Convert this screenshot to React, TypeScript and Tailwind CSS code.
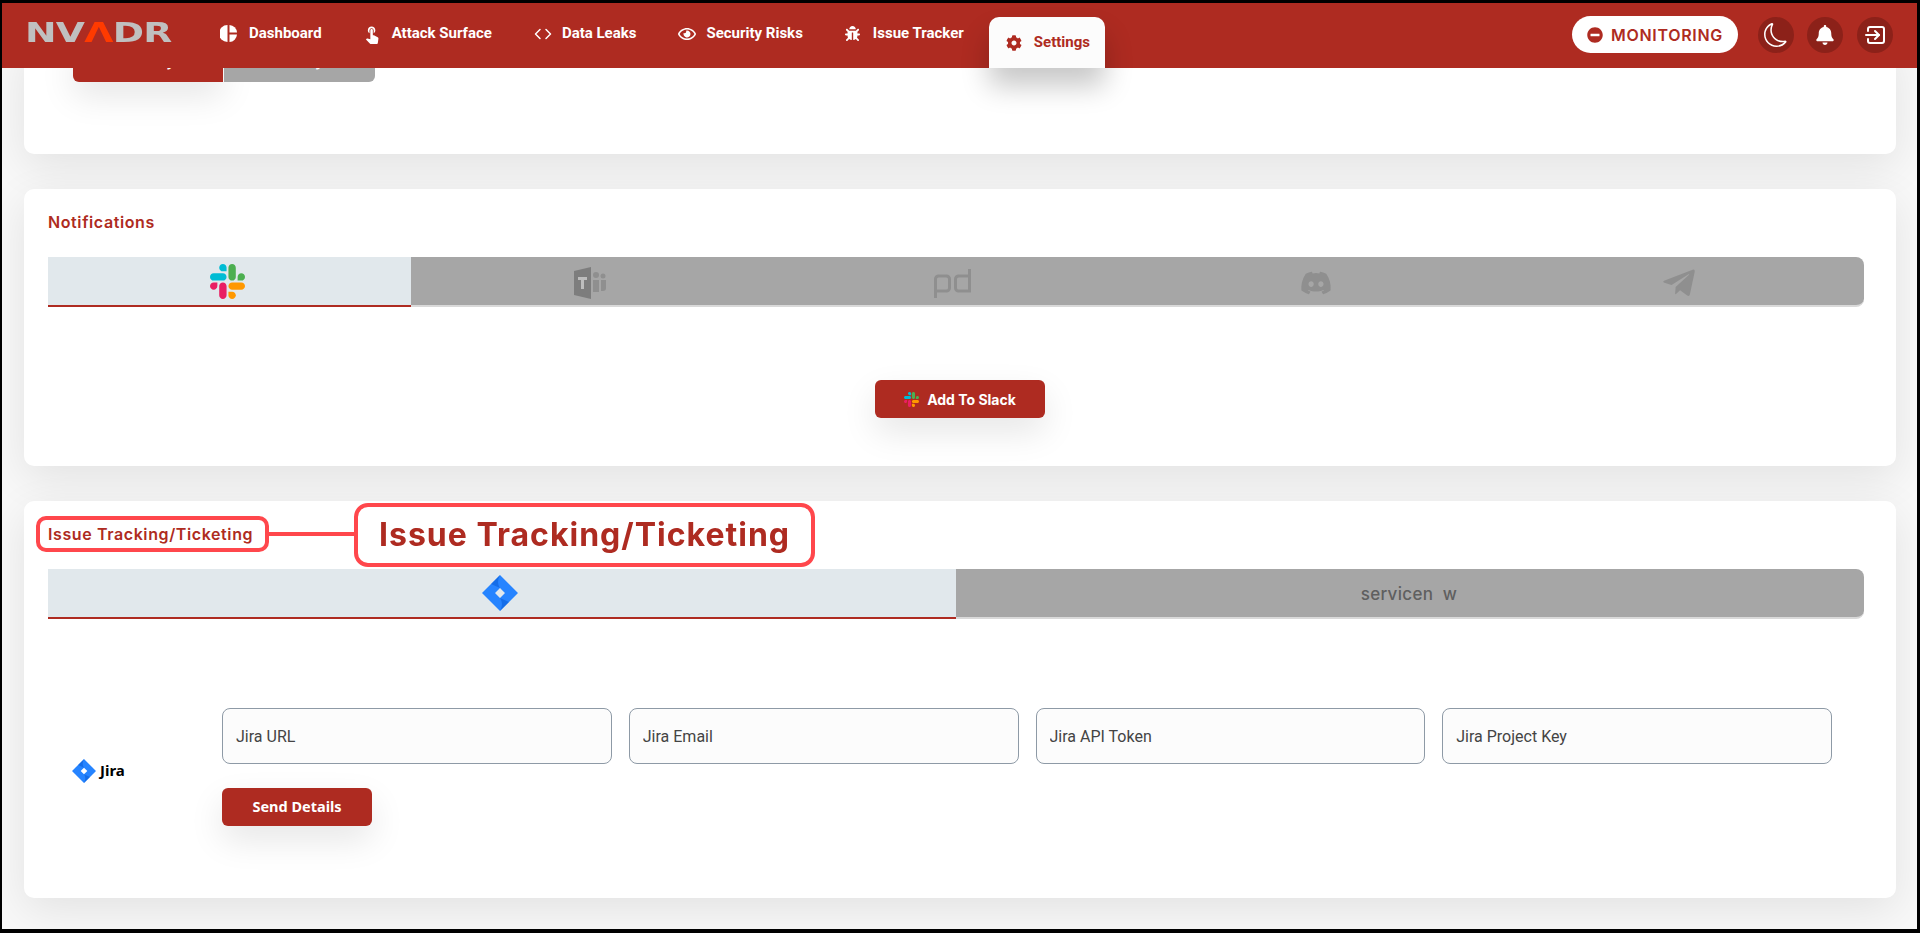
import React from 'react'
import { Code } from 'lucide-react'
import { BsMoon } from 'react-icons/bs'
import { FaBell, FaBug, FaCog, FaDiscord, FaMinusCircle, FaRegEye, FaTelegramPlane } from 'react-icons/fa'
import { MdTouchApp } from 'react-icons/md'

const SlackIcon = ({ size }: { size: number }) => (
  <svg width={size} height={size} viewBox="0 0 122.8 122.8">
    <path fill="#e91e63" d="M25.8 77.6c0 7.1-5.8 12.9-12.9 12.9S0 84.7 0 77.6s5.8-12.9 12.9-12.9h12.9v12.9z" />
    <path fill="#e91e63" d="M32.3 77.6c0-7.1 5.8-12.9 12.9-12.9s12.9 5.8 12.9 12.9v32.3c0 7.1-5.8 12.9-12.9 12.9s-12.9-5.8-12.9-12.9V77.6z" />
    <path fill="#00bcd4" d="M45.2 25.8c-7.1 0-12.9-5.8-12.9-12.9S38.1 0 45.2 0s12.9 5.8 12.9 12.9v12.9H45.2z" />
    <path fill="#00bcd4" d="M45.2 32.3c7.1 0 12.9 5.8 12.9 12.9s-5.8 12.9-12.9 12.9H12.9C5.8 58.1 0 52.3 0 45.2s5.8-12.9 12.9-12.9h32.3z" />
    <path fill="#4caf50" d="M97 45.2c0-7.1 5.8-12.9 12.9-12.9s12.9 5.8 12.9 12.9-5.8 12.9-12.9 12.9H97V45.2z" />
    <path fill="#4caf50" d="M90.5 45.2c0 7.1-5.8 12.9-12.9 12.9s-12.9-5.8-12.9-12.9V12.9C64.7 5.8 70.5 0 77.6 0s12.9 5.8 12.9 12.9v32.3z" />
    <path fill="#ff9800" d="M77.6 97c7.1 0 12.9 5.8 12.9 12.9s-5.8 12.9-12.9 12.9-12.9-5.8-12.9-12.9V97h12.9z" />
    <path fill="#ff9800" d="M77.6 90.5c-7.1 0-12.9-5.8-12.9-12.9s5.8-12.9 12.9-12.9h32.3c7.1 0 12.9 5.8 12.9 12.9s-5.8 12.9-12.9 12.9H77.6z" />
  </svg>
)

const JiraIcon = ({ size }: { size: number }) => (
  <svg width={size} height={size} viewBox="0 0 36 36">
    <path fill="#2684ff" fillRule="evenodd" d="M18 0 36 18 18 36 0 18ZM18 13 13 18 18 23 23 18Z" />
    <path fill="#0052cc" fillOpacity="0.45" d="M18 0 9 9 18 13 C15 8 16 4 18 0ZM18 36 27 27 18 23 C21 28 20 32 18 36Z" />
  </svg>
)

// tile with a T and the two little people, greyed out like the other inactive tabs
const TeamsIcon = () => (
  <svg width="32" height="32" viewBox="0 0 32 32">
    <path fill="#7d7d7d" d="M0 4 17 0V32L0 28Z" />
    <path fill="#bdbdbd" d="M4 10H13V13H10V22H7V13H4Z" />
    <circle cx="22" cy="8" r="3" fill="#8f8f8f" />
    <circle cx="29" cy="9" r="2.5" fill="#8f8f8f" />
    <path fill="#8f8f8f" d="M19 13H25V25H19Z" />
    <path fill="#8f8f8f" d="M27 13H32V21a3 3 0 0 1-3 3H27Z" />
  </svg>
)

const PagerDutyIcon = () => (
  <svg width="37" height="29" viewBox="0 0 37 29" fill="none" stroke="#8f8f8f" strokeWidth="3">
    <path d="M1.5 29V10a3 3 0 0 1 3-3h8a3 3 0 0 1 3 3v9a3 3 0 0 1-3 3h-11" />
    <path d="M35.5 0v22h-11a3 3 0 0 1-3-3v-9a3 3 0 0 1 3-3h11" />
  </svg>
)

const ExitIcon = () => (
  <svg width="24" height="24" viewBox="0 0 24 24" fill="none" stroke="white" strokeWidth="2" strokeLinecap="round" strokeLinejoin="round">
    <path d="M5 8V6a2 2 0 0 1 2-2h12a2 2 0 0 1 2 2v12a2 2 0 0 1-2 2H7a2 2 0 0 1-2-2v-2" />
    <path d="M3 12h13" />
    <path d="M12 8l4 4-4 4" />
  </svg>
)

// pie drawn by hand, the package one has the slice in the wrong place
const PieIcon = () => (
  <svg width="17" height="17" viewBox="0 0 17 17" fill="white">
    <path d="M7.5 0v17A8.5 8.5 0 0 1 7.5 0Z" />
    <path d="M9.5 0A8 8 0 0 1 17 7.5H9.5Z" />
    <path d="M9.5 9.5H17A8 8 0 0 1 9.5 17Z" />
  </svg>
)

const navItems = [
  { label: 'Dashboard', icon: <PieIcon />, gap: 'gap-[12px]' },
  { label: 'Attack Surface', icon: <MdTouchApp size={20} className="-ml-[2px]" />, gap: 'gap-[10px]' },
  { label: 'Data Leaks', icon: <Code size={18} strokeWidth={2} />, gap: 'gap-[10px]' },
  { label: 'Security Risks', icon: <FaRegEye size={18} />, gap: 'gap-[10px]' },
  { label: 'Issue Tracker', icon: <FaBug size={15} />, gap: 'gap-[13px]' },
]

const fields = ['Jira URL', 'Jira Email', 'Jira API Token', 'Jira Project Key']

const cardClass =
  'rounded-[10px] bg-white shadow-[0_12px_44px_rgba(0,0,0,0.09)]'

const Header = () => (
  <header className="relative z-10 flex h-[65px] shrink-0 items-start bg-[#ae2b21] pr-[24px] font-['Roboto',sans-serif]">
    <div className="ml-[23px] mt-[15px] flex h-[30px] w-[146px] origin-left scale-x-[1.45] items-center font-['DejaVu_Sans',sans-serif] text-[26px] font-bold leading-none tracking-[-0.5px] text-[#c0c0c0]">
      NV<span className="text-[#ff3a00]">Λ</span>DR
    </div>
    <nav className="ml-[49px] flex h-[65px] items-start">
      <div className="flex h-[62px] items-center gap-[42px] pb-[1px]">
        {navItems.map((item) => (
          <div key={item.label} className={`flex items-center text-[15px] font-bold text-white ${item.gap}`}>
            {item.icon}
            <span>{item.label}</span>
          </div>
        ))}
      </div>
      <div className="ml-[25px] mt-[14px] flex h-[51px] w-[116px] items-center gap-[12px] rounded-t-[10px] bg-[#fcfcfc] pl-[17px] text-[15px] font-bold text-[#ae2b21] shadow-[0_18px_28px_rgba(0,0,0,0.22)]">
        <FaCog size={16} />
        <span>Settings</span>
      </div>
    </nav>
    <div className="ml-auto mt-[13px] flex items-center">
      <div className="flex h-[37px] w-[166px] items-center gap-[8px] rounded-full bg-white pl-[15px] font-['Inter',sans-serif] text-[16px] font-semibold tracking-[0.7px] text-[#ae2b21]">
        <FaMinusCircle size={16} />
        <span>MONITORING</span>
      </div>
      <div className="ml-[20px] flex h-[36px] w-[36px] items-center justify-center rounded-full bg-[#8c2119] text-white">
        <BsMoon size={24} />
      </div>
      <div className="ml-[13px] flex h-[36px] w-[36px] items-center justify-center rounded-full bg-[#8c2119] text-white">
        <FaBell size={20} />
      </div>
      <div className="ml-[14px] flex h-[36px] w-[36px] items-center justify-center rounded-full bg-[#8c2119]">
        <ExitIcon />
      </div>
    </div>
  </header>
)

export default function App() {
  return (
    <div className="h-[933px] w-full overflow-hidden bg-black pb-[4px] pl-[2px] pr-[3px] pt-[3px]">
      <div className="flex h-full flex-col overflow-hidden bg-[#f8f8f8]">
        <Header />
        <main className="flex flex-col pl-[22px] pr-[21px]">
          <section className={`-mt-[28px] h-[114px] pl-[49px] pt-[4px] ${cardClass}`}>
            <div className="flex font-['Inter',sans-serif] text-[13px] font-bold text-white">
              <div className="flex h-[38px] w-[150px] items-center justify-center rounded-bl-[6px] bg-[#ae2b21] shadow-[0_14px_34px_rgba(0,0,0,0.1)]">
                Monthly
              </div>
              <div className="ml-[1px] flex h-[38px] w-[151px] items-center justify-center rounded-br-[6px] bg-[#a6a6a6]">
                Weekly
              </div>
            </div>
          </section>

          <section className={`mt-[35px] h-[277px] px-[24px] pt-[23px] ${cardClass}`}>
            <h2 className="h-[20px] font-['Inter',sans-serif] text-[16px] font-semibold leading-[20px] tracking-[0.6px] text-[#ae2b21]">
              Notifications
            </h2>
            <div className="mr-[8px] mt-[25px] flex h-[50px]">
              <div className="flex w-[363px] items-center justify-center border-b-2 border-[#ae2b21] bg-[#e1e8ec]">
                <div className="mr-[4px]">
                  <SlackIcon size={35} />
                </div>
              </div>
              <div className="flex flex-1 items-center rounded-r-lg border-b-2 border-[#d9d9d9] bg-[#a6a6a6] text-[#8f8f8f]">
                <div className="-ml-[3px] flex w-full items-center pt-[3px]">
                  <div className="flex w-1/4 justify-center"><TeamsIcon /></div>
                  <div className="flex w-1/4 justify-center pt-[1px]"><PagerDutyIcon /></div>
                  <div className="flex w-1/4 justify-center"><FaDiscord size={32} /></div>
                  <div className="flex w-1/4 justify-center"><FaTelegramPlane size={36} /></div>
                </div>
              </div>
            </div>
            <div className="mt-[73px] flex justify-center">
              <button className="flex h-[38px] w-[170px] items-center justify-center gap-[8px] rounded-[6px] bg-[#ae2b21] font-['Inter',sans-serif] text-[14px] font-bold text-white shadow-[0_14px_34px_rgba(0,0,0,0.1)]">
                <SlackIcon size={15} />
                Add To Slack
              </button>
            </div>
          </section>

          <section className={`relative mt-[35px] h-[397px] px-[24px] pt-[23px] ${cardClass}`}>
            <h2 className="h-[20px] font-['Inter',sans-serif] text-[16px] font-semibold leading-[20px] tracking-[0.6px] text-[#ae2b21]">
              Issue Tracking/Ticketing
            </h2>
            <div className="absolute left-[12px] top-[15px] h-[36px] w-[233px] rounded-[10px] border-[4px] border-[#ff474c]" />
            <div className="absolute left-[245px] top-[31px] h-[4px] w-[85px] bg-[#ff474c]" />
            <div className="absolute left-[330px] top-[2px] flex h-[64px] w-[461px] items-center justify-center rounded-[14px] border-[4px] border-[#ff474c] bg-white">
              <span className="font-['Inter',sans-serif] text-[32px] font-bold tracking-[1px] text-[#ae2b21] blur-[0.4px]">
                Issue Tracking/Ticketing
              </span>
            </div>
            <div className="mr-[8px] mt-[25px] flex h-[50px]">
              <div className="flex w-[908px] items-center justify-center border-b-2 border-[#ae2b21] bg-[#e1e8ec]">
                <div className="mr-[5px]">
                  <JiraIcon size={36} />
                </div>
              </div>
              <div className="flex flex-1 items-center justify-center rounded-r-lg border-b-2 border-[#d9d9d9] bg-[#a6a6a6] pr-[2px] pt-[3px] font-['Inter',sans-serif] text-[17px] font-medium tracking-[0.3px] text-[#5f5f5f]">
                servicen&nbsp;&nbsp;w
              </div>
            </div>
            <div className="mt-[89px] flex">
              <div className="flex w-[174px] shrink-0 items-center gap-[4px] pl-[24px] pt-[7px] font-['Noto_Sans',sans-serif] text-[15px] font-bold text-black">
                <JiraIcon size={24} />
                Jira
              </div>
              <div className="flex flex-col items-start">
                <div className="grid w-[1610px] grid-cols-4 gap-[17px]">
                  {fields.map((field) => (
                    <input
                      key={field}
                      placeholder={field}
                      className="h-[56px] rounded-lg border border-[#8e9aa6] bg-[#fcfcfc] px-[13px] font-['Roboto',sans-serif] text-[16px] placeholder:text-[#444444] focus:outline-none"
                    />
                  ))}
                </div>
                <button className="mt-[24px] h-[38px] w-[150px] rounded-[6px] bg-[#ae2b21] font-['Noto_Sans',sans-serif] text-[14.5px] font-bold text-white shadow-[0_14px_34px_rgba(0,0,0,0.1)]">
                  Send Details
                </button>
              </div>
            </div>
          </section>
        </main>
      </div>
    </div>
  )
}
